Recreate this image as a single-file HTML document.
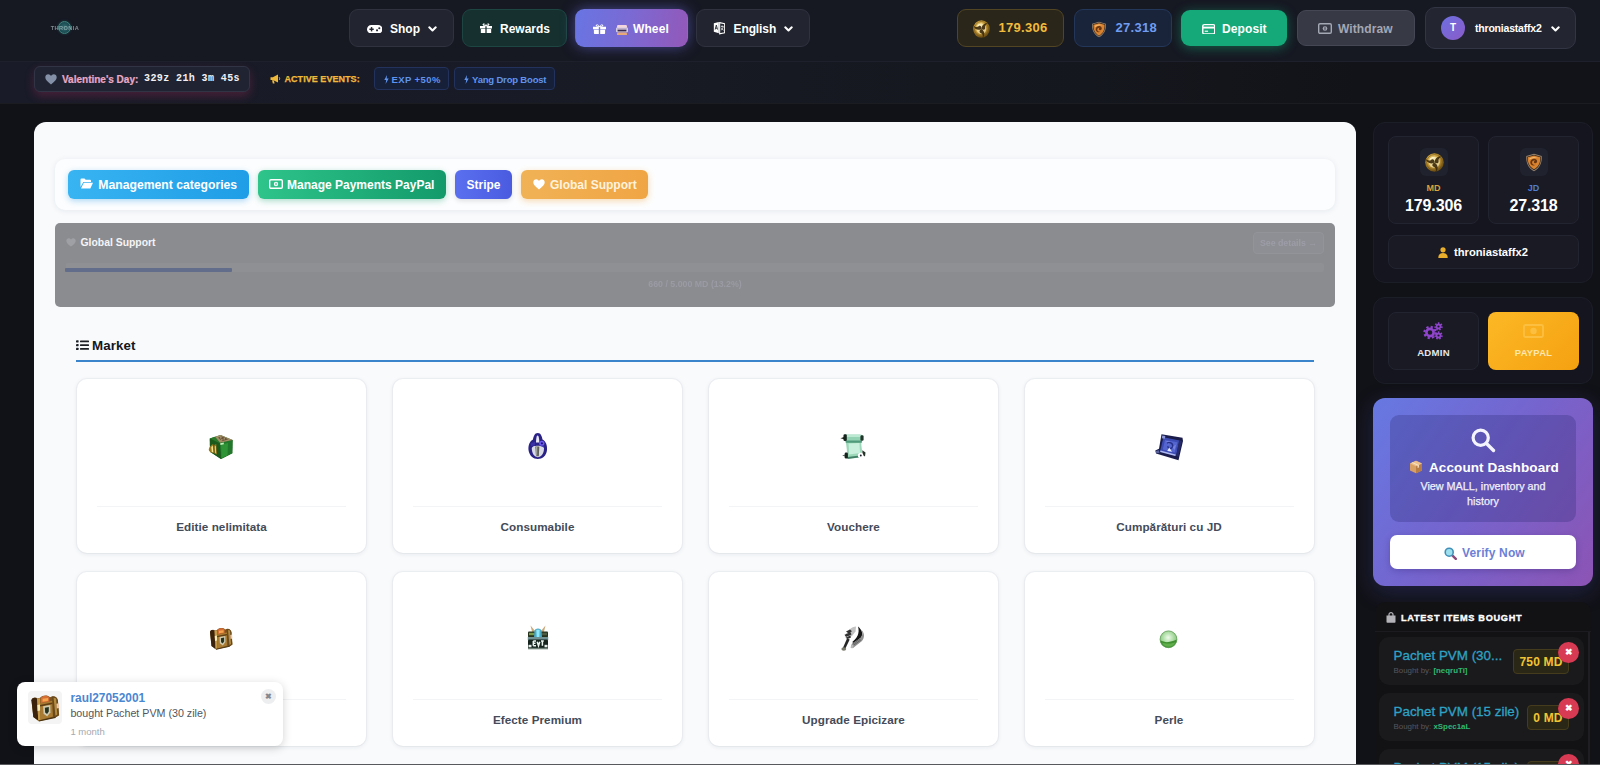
<!DOCTYPE html>
<html lang="en">
<head>
<meta charset="utf-8">
<title>Market</title>
<style>
*{box-sizing:border-box;margin:0;padding:0}
html,body{width:1600px;height:765px;overflow:hidden}
body{background:#111217;font-family:"Liberation Sans",Arial,sans-serif;color:#fff;position:relative;-webkit-font-smoothing:antialiased}
.abs{position:absolute}
svg{display:block}
/* header */
#hdr{left:0;top:0;width:1600px;height:62px;background:#161822;border-bottom:1px solid #1e212c}
#sub{left:0;top:62px;width:1600px;height:42px;background:linear-gradient(90deg,#191b29 0%,#181a24 40%,#15171e 68%,#121318 85%);border-bottom:1px solid #1a1c22}
.hb{position:absolute;border-radius:9px;border:1px solid transparent;display:flex;align-items:center;justify-content:center;font-weight:700;font-size:12px;white-space:nowrap}
.hb span{display:inline-block}
.chip{border-radius:4px;background:#172039;border:1px solid #22325c;color:#5f94ee;font-size:9.500px;font-weight:700;white-space:nowrap;letter-spacing:-.1px}
/* main */
#main{left:34px;top:122px;width:1322px;height:660px;background:#f8fafc;border-radius:12px 12px 0 0}
.tb{position:absolute;top:170px;height:29px;border-radius:6px;color:#fff;font-weight:700;font-size:12px;display:flex;align-items:center;justify-content:center;white-space:nowrap;box-shadow:0 2px 5px rgba(0,0,0,.12)}
.card{position:absolute;width:289px;height:174px;background:#fff;border-radius:10px;box-shadow:0 1px 5px rgba(30,40,60,.09),0 0 0 1px rgba(30,40,60,.03)}
.card .dv{position:absolute;left:20px;right:20px;top:127px;height:1px;background:#f3f4f6}
.card .lb{position:absolute;left:0;right:0;top:141px;text-align:center;font-weight:700;font-size:11.700px;color:#444b59;letter-spacing:.05px}
.card .ic{position:absolute;left:132px;top:55px;width:26px;height:26px}
/* sidebar */
.pn{position:absolute;left:1373px;width:220px;background:#15151f;border:1px solid #1c1e27;border-radius:12px}
.bx{position:absolute;background:#191a24;border:1px solid #22242f;border-radius:8px}

.it{position:absolute;left:1379px;width:205px;height:48px;background:#1a1a1d;border-radius:10px}
.it .t1{left:14.500px;top:11px;font-size:13.400px;color:#2ea2c4;white-space:nowrap;-webkit-text-stroke:.3px #2ea2c4}
.it .t2{left:14.500px;top:29px;font-size:7.900px;color:#56575d;white-space:nowrap}
.it .t2 b{color:#2fb874;font-weight:700}
.it .pr{top:11.500px;height:25px;border-radius:4px;background:#2a2717;border:1px solid #443c1c;color:#f3c331;font-size:12px;font-weight:700;line-height:24px;text-align:center;white-space:nowrap;letter-spacing:.2px}
.it .rx{left:179px;top:4.500px;width:21px;height:21px;border-radius:50%;background:#d93a53;color:#fff;font-size:9px;line-height:21px;text-align:center;font-weight:700}
</style>
</head>
<body>

<div id="hdr" class="abs">
  <!-- logo -->
  <div class="abs" id="logo" style="left:50px;top:17px;width:30px;height:22px;filter:blur(.35px)">
    <div class="abs" style="left:7.500px;top:4px;width:13px;height:13px;border-radius:50%;background:radial-gradient(circle,#2f6f72 0%,#1e4d54 60%,#1a3a42 100%);border:1.200px solid #3c8682;box-shadow:0 0 3px rgba(40,110,110,.5)"></div>
    <div class="abs" style="left:0;top:7.500px;width:30px;text-align:center;font-size:5.600px;font-weight:700;color:#b9c9cc;letter-spacing:.45px;opacity:.65;white-space:nowrap">THRONIA</div>
  </div>
  <!-- Shop -->
  <div class="hb" style="left:349px;top:9px;width:105px;height:38px;background:#22252f;border:1px solid #30333f">
    <svg class="abs" style="left:16.500px;top:14.500px" width="15.500" height="8.500" viewBox="0 0 17 9.400" preserveAspectRatio="none"><rect x="0" y="0" width="17" height="9.400" rx="4.700" fill="#fff"/><rect x="2.600" y="3.900" width="4.800" height="1.600" fill="#22252f"/><rect x="4.200" y="2.300" width="1.600" height="4.800" fill="#22252f"/><circle cx="11" cy="5.900" r="1.150" fill="#22252f"/><circle cx="13.500" cy="3.500" r="1.150" fill="#22252f"/></svg>
    <span class="abs" style="left:40px;top:11.500px">Shop</span>
    <svg class="abs" style="left:78px;top:16px" width="9" height="6.300" viewBox="0 0 10 7"><path d="M1.400 1.500 L5 5 L8.600 1.500" fill="none" stroke="#fff" stroke-width="2.300" stroke-linecap="round" stroke-linejoin="round"/></svg>
  </div>
  <!-- Rewards -->
  <div class="hb" style="left:462px;top:9px;width:105px;height:38px;background:#15302f;border:1px solid #1d4541">
    <svg class="abs gift" style="left:17px;top:12.5px" width="12" height="10.5" viewBox="0 0 13 10.500" preserveAspectRatio="none"><path d="M0 3h13v2.400H0z M.9 6h11.200v3.700a.8.800 0 0 1-.8.800H1.700a.8.800 0 0 1-.8-.8z" fill="#fff"/><path d="M6.500 3C5 3 3.100 2.600 3.100 1.500 3.100.3 5.500.2 6.500 3 7.500.2 9.900.3 9.900 1.500 9.900 2.600 8 3 6.500 3z" fill="#fff" stroke="#fff" stroke-width=".6"/><circle cx="4.700" cy="1.700" r=".55" fill="#15302f"/><circle cx="8.300" cy="1.700" r=".55" fill="#15302f"/><rect x="5.800" y="3.300" width="1.400" height="7.200" fill="#15302f"/></svg>
    <span class="abs" style="left:37px;top:11.500px">Rewards</span>
  </div>
  <!-- Wheel -->
  <div class="hb" style="left:575px;top:9px;width:113px;height:38px;background:linear-gradient(100deg,#6875e3 0%,#7c69d2 50%,#9358b9 100%);box-shadow:0 0 14px rgba(110,110,230,.55)">
    <svg class="abs gift" style="left:16.5px;top:14px" width="13" height="10" viewBox="0 0 13 10.500" preserveAspectRatio="none"><path d="M0 3h13v2.400H0z M.9 6h11.200v3.700a.8.800 0 0 1-.8.800H1.700a.8.800 0 0 1-.8-.8z" fill="#fff"/><path d="M6.500 3C5 3 3.100 2.600 3.100 1.500 3.100.3 5.500.2 6.500 3 7.500.2 9.900.3 9.900 1.500 9.900 2.600 8 3 6.500 3z" fill="#fff" stroke="#fff" stroke-width=".6"/><circle cx="4.700" cy="1.700" r=".55" fill="#6f72dc"/><circle cx="8.300" cy="1.700" r=".55" fill="#6f72dc"/><rect x="5.800" y="3.300" width="1.400" height="7.200" fill="#6f72dc"/></svg>
    <svg class="abs" style="left:39.500px;top:14.500px" width="12" height="10.500" viewBox="0 0 12 10.500"><rect x="1" y="0" width="10" height="3.200" rx="1.200" fill="#f3d3dc"/><rect x="0" y="2.600" width="12" height="4.600" rx="1" fill="#d5cfe2"/><rect x="1.600" y="4.600" width="8.800" height="1.800" fill="#3a2a50"/><rect x="1.200" y="3.300" width="9.600" height="1" fill="#b7a2c8"/><rect x="1" y="7.400" width="10" height="3" rx="1" fill="#e8a878"/></svg>
    <span class="abs" style="left:57px;top:11.500px;letter-spacing:.1px">Wheel</span>
  </div>
  <!-- English -->
  <div class="hb" style="left:696px;top:9px;width:114px;height:38px;background:#22252f;border:1px solid #30333f">
    <svg class="abs" style="left:15.500px;top:11px" width="12.500" height="13.500" viewBox="0 0 15 15" preserveAspectRatio="none"><path d="M1 2.500 L7 1 V13.500 L1 12z" fill="#fff"/><path d="M8 1.800 L14 3 V13 L8 14.200z" fill="none" stroke="#fff" stroke-width="1.300"/><path d="M2.600 9.500 L4 4.500 L5.400 9.500 M3 8 H5" stroke="#22252f" stroke-width="1" fill="none"/><path d="M9.500 6 H12.500 M11 5 V6 M9.800 10 C11 9.500 12 8 12.200 6 M10 7.500 C10.500 9 11.500 9.800 12.800 10.200" stroke="#fff" stroke-width=".9" fill="none"/></svg>
    <span class="abs" style="left:36.500px;top:11.500px;letter-spacing:-.1px">English</span>
    <svg class="abs" style="left:87px;top:16px" width="9" height="6.300" viewBox="0 0 10 7"><path d="M1.400 1.500 L5 5 L8.600 1.500" fill="none" stroke="#fff" stroke-width="2.300" stroke-linecap="round" stroke-linejoin="round"/></svg>
  </div>
  <!-- MD pill -->
  <div class="hb" style="left:957px;top:9px;width:107px;height:38px;background:#2a261a;border:1px solid #514523">
    <svg class="abs" style="left:15px;top:9.500px" width="17" height="18" viewBox="0 0 17 17" preserveAspectRatio="none"><defs><radialGradient id="gc" cx=".42" cy=".36" r=".72"><stop offset="0" stop-color="#f6e9a6"/><stop offset=".45" stop-color="#c99c36"/><stop offset=".8" stop-color="#7c5b19"/><stop offset="1" stop-color="#47330e"/></radialGradient></defs><circle cx="8.500" cy="8.500" r="8.300" fill="url(#gc)"/><circle cx="8.500" cy="8.500" r="7.100" fill="none" stroke="#6e5216" stroke-width=".8" opacity=".6"/><circle cx="8.300" cy="8.300" r="5" fill="#fff3c4" opacity=".6"/><g fill="#3a280a" opacity=".9" transform="translate(8.500 8.500) scale(1.650) translate(-8.500 -8.500)"><path d="M8.500 8.500 C8.500 6.200 10.600 4.600 12.600 5.400 C11.200 5.600 10.500 6.700 10.700 7.800 C10.900 8.800 9.800 9.400 8.500 8.500z"/><path d="M8.500 8.500 C8.500 6.200 10.600 4.600 12.600 5.400 C11.200 5.600 10.500 6.700 10.700 7.800 C10.900 8.800 9.800 9.400 8.500 8.500z" transform="rotate(120 8.500 8.500)"/><path d="M8.500 8.500 C8.500 6.200 10.600 4.600 12.600 5.400 C11.200 5.600 10.500 6.700 10.700 7.800 C10.900 8.800 9.800 9.400 8.500 8.500z" transform="rotate(240 8.500 8.500)"/></g><path d="M4.300 5.200c1.300-1.500 3.300-2 5-1.500-1.900 0-3.300.8-4.300 2.300z" fill="#fff9dc" opacity=".8"/></svg>
    <span class="abs" style="left:40.500px;top:10px;font-size:13px;letter-spacing:.3px;color:#f2bb3c">179.306</span>
  </div>
  <!-- JD pill -->
  <div class="hb" style="left:1074px;top:9px;width:98px;height:38px;background:#19243a;border:1px solid #23375b">
    <svg class="abs" style="left:16px;top:10.500px" width="16" height="17" viewBox="0 0 17 18" preserveAspectRatio="none"><path d="M8.500 .8 L15.800 2.800 C16.300 9 14.200 14.200 8.500 17.200 C2.800 14.200 .7 9 1.200 2.800z" fill="#9a8670"/><path d="M8.500 1.700 L15 3.500 C15.400 9 13.500 13.600 8.500 16.300 C3.500 13.600 1.600 9 2 3.500z" fill="#2e241c"/><path d="M8.500 2.400 L14.400 4 C14.700 9 13 13 8.500 15.500 C4 13 2.300 9 2.600 4z" fill="#d9822f"/><path d="M5 8.500c.3-2.600 3.200-3.900 5.300-2.600 1.200.8 1.500 2.200.8 3.200-.8 1.100-2.400.9-2.700-.3-.2-.8.400-1.400 1.100-1.300-1.300-.8-2.900.2-2.800 1.800.1 1.500 1.600 2.400 3.200 1.900-2.100 1.500-5.200.2-4.900-2.700z" fill="#5b2c0e" opacity=".9"/><path d="M4.200 4.800 L8.500 3.500 L12.500 4.600 C10 4.500 6.500 5 4.200 6.500z" fill="#f6c27a" opacity=".8"/></svg>
    <span class="abs" style="left:40.500px;top:10px;font-size:13px;letter-spacing:.3px;color:#6f9df2">27.318</span>
  </div>
  <!-- Deposit -->
  <div class="hb" style="left:1181px;top:10px;width:106px;height:36px;background:#15a878;box-shadow:0 2px 12px rgba(21,180,125,.45)">
    <svg class="abs" style="left:19.500px;top:12.500px" width="13.500" height="10.500" viewBox="0 0 14 12" preserveAspectRatio="none"><rect x=".8" y=".8" width="12.400" height="10.400" rx="1.600" fill="none" stroke="#fff" stroke-width="1.500"/><rect x="1" y="3" width="12" height="2.200" fill="#fff"/><rect x="2.800" y="7.600" width="3.500" height="1.300" fill="#fff"/></svg>
    <span class="abs" style="left:40px;top:10.500px;letter-spacing:.1px">Deposit</span>
  </div>
  <!-- Withdraw -->
  <div class="hb" style="left:1297px;top:10px;width:118px;height:36px;background:#373a45;border:1px solid #454854;color:#a4a7b4">
    <svg class="abs" style="left:20px;top:12px" width="14" height="11" viewBox="0 0 14 11"><rect x=".7" y=".7" width="12.600" height="9.600" rx="1.300" fill="none" stroke="#a4a7b4" stroke-width="1.400"/><circle cx="7" cy="5.500" r="2.300" fill="#a4a7b4"/><rect x="6.500" y="4.200" width="1" height="2.600" fill="#373a45"/></svg>
    <span class="abs" style="left:40px;top:10.500px;letter-spacing:.1px">Withdraw</span>
  </div>
  <!-- User -->
  <div class="hb" style="left:1425px;top:7px;width:151px;height:42px;background:#232530;border:1px solid #323543;border-radius:10px">
    <div class="abs" style="left:15px;top:8px;width:24px;height:24px;border-radius:50%;background:linear-gradient(135deg,#6d6fe0,#8a5cc8);font-size:10px;line-height:24px;text-align:center">T</div>
    <span class="abs" style="left:49px;top:14px;font-size:10.500px;letter-spacing:-.2px">throniastaffx2</span>
    <svg class="abs" style="left:125px;top:18px" width="9" height="6.300" viewBox="0 0 10 7"><path d="M1.400 1.500 L5 5 L8.600 1.500" fill="none" stroke="#fff" stroke-width="2.300" stroke-linecap="round" stroke-linejoin="round"/></svg>
  </div>
</div>
<div id="sub" class="abs">
  <div class="abs" style="left:34px;top:4px;width:216px;height:26px;border-radius:6px;background:#202331;border:1px solid #313445;box-shadow:0 4px 10px rgba(200,50,105,.27)">
    <svg class="abs" style="left:10px;top:7px" width="12" height="11" viewBox="0 0 12 11"><path d="M6 10.500 C2 7.500 0.300 5.500 0.300 3.300 C0.300 1.500 1.700.3 3.200.3 C4.400.3 5.400 1 6 2 C6.600 1 7.600.3 8.800.3 C10.300.3 11.700 1.500 11.700 3.300 C11.700 5.500 10 7.500 6 10.500z" fill="#8390a8"/></svg>
    <span class="abs" style="left:27px;top:6.500px;font-size:10px;font-weight:700;color:#e9a9c6;white-space:nowrap;-webkit-text-stroke:.2px #e9a9c6">Valentine's Day:</span>
    <span class="abs" style="left:109px;top:5.500px;font-family:'Liberation Mono',monospace;font-size:10px;font-weight:700;color:#f1f1f4;white-space:nowrap;letter-spacing:.4px">329z 21h 3m 45s</span>
  </div>
  <svg class="abs" style="left:270px;top:12px" width="11" height="10" viewBox="0 0 11 10"><path d="M.5 3.200h2.300L8 .6v8L2.800 6H.5z" fill="#f0b93a"/><path d="M2 6.200h1.800l.8 3.200H2.800z" fill="#f0b93a"/><path d="M9 3.200c.9.500.9 2.300 0 2.800" stroke="#f0b93a" stroke-width="1" fill="none"/></svg>
  <span class="abs" style="left:284.500px;top:11.500px;font-size:9px;font-weight:700;color:#f0b93a;white-space:nowrap;letter-spacing:.05px;-webkit-text-stroke:.25px #f0b93a">ACTIVE EVENTS:</span>
  <div class="abs chip" style="left:374px;top:5px;width:75px;height:23px"><svg class="abs" style="left:9px;top:7px" width="5" height="9" viewBox="0 0 5 9"><path d="M3 0L.3 5h1.900L1.600 9 4.700 3.600H2.700z" fill="#5f94ee"/></svg><span class="abs" style="left:16.500px;top:5.500px;font-size:9.500px;letter-spacing:.4px">EXP +50%</span></div>
  <div class="abs chip" style="left:454px;top:5px;width:101px;height:23px"><svg class="abs" style="left:9px;top:7px" width="5" height="9" viewBox="0 0 5 9"><path d="M3 0L.3 5h1.900L1.600 9 4.700 3.600H2.700z" fill="#5f94ee"/></svg><span class="abs" style="left:17px;top:5.500px;font-size:9.500px;letter-spacing:-.18px">Yang Drop Boost</span></div>
</div>

<div id="main" class="abs"></div>
<!-- toolbar -->
<div class="abs" style="left:55px;top:159px;width:1280px;height:51px;background:#fcfdfe;border-radius:10px;box-shadow:0 1px 6px rgba(30,40,70,.08)"></div>
<div class="tb" style="left:68px;width:181px;background:linear-gradient(90deg,#38b4f2,#1f9de6);box-shadow:0 2px 6px rgba(30,150,230,.35)">
  <svg class="abs" style="left:12px;top:8px" width="13" height="11" viewBox="0 0 13 11"><path d="M.5 1.500A1 1 0 0 1 1.500.5h3l1.200 1.300h4.300a1 1 0 0 1 1 1V4H3.300L.5 9z" fill="#fff"/><path d="M3.800 4.800H13L10.300 10.500H1z" fill="#fff"/></svg>
  <span class="abs" style="left:30.300px;top:7.500px;font-size:12.200px">Management categories</span>
</div>
<div class="tb" style="left:258px;width:188px;background:linear-gradient(90deg,#2ec48a,#139a6b);box-shadow:0 2px 6px rgba(20,160,110,.35)">
  <svg class="abs" style="left:11px;top:9px" width="14" height="10" viewBox="0 0 14 10"><rect x=".7" y=".7" width="12.600" height="8.600" rx="1.200" fill="none" stroke="#fff" stroke-width="1.400"/><circle cx="7" cy="5" r="2.200" fill="#fff"/><rect x="6.500" y="3.800" width="1" height="2.400" fill="#21b07c"/></svg>
  <span class="abs" style="left:29px;top:7.500px">Manage Payments PayPal</span>
</div>
<div class="tb" style="left:455px;width:57px;background:linear-gradient(90deg,#5a6ff0,#4a5be0)"><span class="abs" style="left:11.500px;top:7.500px">Stripe</span></div>
<div class="tb" style="left:521px;width:127px;background:linear-gradient(90deg,#f0b256,#f0a544);box-shadow:0 2px 6px rgba(240,165,60,.4)">
  <svg class="abs" style="left:12px;top:9px" width="12" height="11" viewBox="0 0 12 11"><path d="M6 10.500 C2 7.500 0.300 5.500 0.300 3.300 C0.300 1.500 1.700.3 3.200.3 C4.400.3 5.400 1 6 2 C6.600 1 7.600.3 8.800.3 C10.300.3 11.700 1.500 11.700 3.300 C11.700 5.500 10 7.500 6 10.500z" fill="#fff"/></svg>
  <span class="abs" style="left:29px;top:7.500px;color:#fff3dd">Global Support</span>
</div>
<!-- global support panel -->
<div class="abs" style="left:55px;top:223px;width:1280px;height:84px;background:#8b8c90;border-radius:5px">
  <svg class="abs" style="left:11px;top:15px" width="10" height="9" viewBox="0 0 12 11"><path d="M6 10.500 C2 7.500 0.300 5.500 0.300 3.300 C0.300 1.500 1.700.3 3.200.3 C4.400.3 5.400 1 6 2 C6.600 1 7.600.3 8.800.3 C10.300.3 11.700 1.500 11.700 3.300 C11.700 5.500 10 7.500 6 10.500z" fill="#9fa0a5"/></svg>
  <span class="abs" style="left:25.500px;top:13.500px;font-size:10.400px;font-weight:700;color:#f4f4f6;white-space:nowrap">Global Support</span>
  <div class="abs" style="left:1198px;top:9px;width:71px;height:22px;border:1px solid #939499;border-radius:4px;background:#8e8f94;font-size:8.800px;font-weight:700;color:#9c9da7;text-align:center;line-height:21px;white-space:nowrap"><span style="filter:blur(.4px)">See details →</span></div>
  <div class="abs" style="left:11px;top:40px;width:1258px;height:9px;background:#8f9094;border-radius:2px"></div>
  <div class="abs" style="left:10px;top:45px;width:167px;height:4px;background:#626d8b;border-radius:1px"></div>
  <div class="abs" style="left:0;top:55.500px;width:1280px;text-align:center;font-size:8.800px;font-weight:700;color:#9a9ba4;white-space:nowrap;filter:blur(.4px)">660 / 5.000 MD (13.2%)</div>
</div>
<!-- market heading -->
<svg class="abs" style="left:76px;top:339.700px" width="13" height="10.300" viewBox="0 0 13 11" preserveAspectRatio="none"><rect x="0" y=".3" width="2.600" height="2.400" rx=".5" fill="#1c1f26"/><rect x="0" y="4.300" width="2.600" height="2.400" rx=".5" fill="#1c1f26"/><rect x="0" y="8.300" width="2.600" height="2.400" rx=".5" fill="#1c1f26"/><rect x="4" y=".6" width="9" height="1.800" rx=".6" fill="#1c1f26"/><rect x="4" y="4.600" width="9" height="1.800" rx=".6" fill="#1c1f26"/><rect x="4" y="8.600" width="9" height="1.800" rx=".6" fill="#1c1f26"/></svg>
<span class="abs" style="left:92px;top:337.500px;font-size:13.300px;font-weight:700;color:#14171d;white-space:nowrap;letter-spacing:.1px">Market</span>
<div class="abs" style="left:76px;top:359.500px;width:1238px;height:2px;background:#3a84cb"></div>
<!-- cards -->
<div class="card" style="left:77px;top:379px"><div class="dv"></div><div class="lb">Editie nelimitata</div></div>
<div class="card" style="left:393px;top:379px"><div class="dv"></div><div class="lb">Consumabile</div></div>
<div class="card" style="left:709px;top:379px"><div class="dv"></div><div class="lb">Vouchere</div></div>
<div class="card" style="left:1024.5px;top:379px"><div class="dv"></div><div class="lb">Cumpărături cu JD</div></div>
<div class="card" style="left:77px;top:572px"><div class="dv"></div><div class="lb">Pachete</div></div>
<div class="card" style="left:393px;top:572px"><div class="dv"></div><div class="lb">Efecte Premium</div></div>
<div class="card" style="left:709px;top:572px"><div class="dv"></div><div class="lb">Upgrade Epicizare</div></div>
<div class="card" style="left:1024.5px;top:572px"><div class="dv"></div><div class="lb">Perle</div></div>

<!-- card icons -->
<svg width="0" height="0" style="position:absolute"><defs><filter id="bl" x="-10%" y="-10%" width="120%" height="120%"><feGaussianBlur stdDeviation=".45"/></filter><filter id="bl2" x="-10%" y="-10%" width="120%" height="120%"><feGaussianBlur stdDeviation=".7"/></filter></defs></svg>
<!-- 1 green cube -->
<svg class="abs" style="left:208px;top:434px" width="26" height="26" viewBox="0 0 26 26"><g filter="url(#bl)">
<path d="M1.800 4.500 L12.500 1 L24.600 6 L24.300 19.200 L13 25 L2 17.800z" fill="#1c5c20"/>
<path d="M11.500 9 L24.600 6 L24.300 19.200 L13 25z" fill="#23782a"/>
<path d="M13 10.500 L20 9 L19.500 21.500 L13.500 24z" fill="#2f9434"/>
<path d="M1.800 4.500 L11.500 9 L13 25 L2 17.800z" fill="#1a5a1f"/>
<path d="M1.800 4.500 L7 2.800 L12 8.800 L11.500 9z" fill="#2a7a2c"/>
<path d="M7 2.800 L12.500 1 L24.600 6 L12 8.800z" fill="#a39066"/>
<path d="M10 3.500 L14 2.500 L20.500 5.200 L14 7.200z" fill="#6b553a"/>
<path d="M12 4 L13.500 3.700 M15.500 5 L17 4.800 M13 6 L14.500 5.800" stroke="#d8c9a0" stroke-width=".8"/>
<path d="M12.200 9.300 L15.800 8.600 L15.800 10.200 L12.500 11z" fill="#c6f0bc"/>
<path d="M.8 15 C1.500 12.500 3.500 11 5.200 10 L6 19 L3 18.500 C1.500 17.800 .5 16.500 .8 15z" fill="#9a7a1c"/>
<path d="M5.500 12 C6.500 10.500 7.500 10 8.300 10 L9 20.500 L6.300 19.500z" fill="#8a6c18"/>
<path d="M3.300 13 L4.800 11.500 L5.200 18.300 L3.800 18z" fill="#f3e694"/>
<path d="M6.800 12.500 L7.800 11.500 L8.200 19.500 L7.200 19z" fill="#e6d070"/>
</g></svg>
<!-- 2 indigo ring -->
<svg class="abs" style="left:526px;top:431px" width="24" height="30" viewBox="0 0 24 30"><g filter="url(#bl)">
<path d="M11.800 2 C8.500 2 7.500 5.500 7 8.500 C3.500 10.500 2 14.500 2.500 19 C3.200 24.800 7.500 28 11.800 28 C16.200 28 20.500 24.800 21 19 C21.400 14.500 20 10.500 16.500 8.500 C16 5.500 15 2 11.800 2z" fill="#2a2286"/>
<path d="M11.600 4.600 C10.500 4.600 10.100 8 10 11.500 L13.300 11.500 C13.200 8 12.800 4.600 11.600 4.600z" fill="#e9e9f6"/>
<path d="M5.800 17.500 C5.800 15.500 8.500 14.800 11.800 14.800 C15.200 14.800 18 15.500 18 17.500 C18 22.500 15 26.200 11.800 26.200 C8.600 26.200 5.800 22.500 5.800 17.500z" fill="#d9dae8"/>
<path d="M9.300 15.500 L13.300 15.500 L12.800 25.300 L10 25.300z" fill="#5e6058"/>
<path d="M10 15.800 L11.300 15.800 L11.200 24.800 L10.300 24.800z" fill="#a9aaa6"/>
<circle cx="15.800" cy="12.300" r="2.600" fill="#6e5cf0"/><circle cx="15.900" cy="12.300" r="1.100" fill="#1f1870"/>
<path d="M4.500 12.500 L9.300 10.500 L9 14.500 L5 15z" fill="#3a30a8"/>
<path d="M13.500 14.800 L17 14.200 L18 16.500z" fill="#4a40c0"/>
</g></svg>
<!-- 3 mint scroll -->
<svg class="abs" style="left:839px;top:432px" width="28" height="29" viewBox="0 0 28 29"><g filter="url(#bl)">
<path d="M6.500 8 L22.500 8 C22 12 22.500 15 23 18 L22.500 25.500 L8.500 26.800 L8 21 C8 16 7 12 6.500 8z" fill="#9bd8b9"/>
<path d="M9.500 11.500 L20.500 11 C20.500 15 21 18 21.200 21 L10 22.500 C10 18 9.800 14.500 9.500 11.500z" fill="#c8f0dc"/>
<rect x="4.500" y="2.500" width="19.500" height="6" rx="2.800" fill="#93d3b3"/>
<path d="M6 4 L22 4" stroke="#c9f0dd" stroke-width="1.500"/>
<path d="M6.500 8.500 L23 8.500 L22.800 10.800 L6.800 10.800z" fill="#4f9a7b"/>
<rect x="4.500" y="2.300" width="3.300" height="6.800" rx="1.300" fill="#16221c"/><path d="M1.500 6.200 L5 5 L5 7.300z" fill="#16221c"/>
<rect x="21.400" y="3.200" width="3.200" height="5.600" rx="1.300" fill="#23362c"/>
<path d="M8.500 25 L21 23.500 L21 25.300 L8.500 26.900z" fill="#3f7f64"/>
<rect x="5.700" y="20.500" width="3.200" height="6" rx="1.300" fill="#16221c"/><path d="M3.200 23.500 L6 22.500 L6 24.600z" fill="#4a5a52"/>
<path d="M23.300 18.200 L26.500 20.500 L26 24.500 L23.500 23z" fill="#25342c"/>
<circle cx="21.600" cy="23.400" r="2.700" fill="#fff"/><circle cx="21.800" cy="23.500" r=".95" fill="#1c2030"/>
</g></svg>
<!-- 4 blue scroll -->
<svg class="abs" style="left:1153px;top:430.500px" width="32" height="31.500" viewBox="0 0 32 30" preserveAspectRatio="none"><g filter="url(#bl)">
<path d="M8.500 3 L29.500 6.500 L30 9.500 L25.500 27.800 L3 21.500 L2.300 18.500 L6 17z" fill="#1a1e4c"/>
<path d="M10.500 6 L26.500 9 L23 23.500 L7 19.500z" fill="#3c4bb4"/>
<path d="M12 8.500 L24.500 10.800 L21.800 20.500 L9.800 17.500z" fill="#5565d0"/>
<path d="M13 10 L17 9.500 L16 13z" fill="#7d8be6"/><path d="M19 15 L23 13 L21.500 18z" fill="#7483e0"/>
<path d="M14 11.500 C17 10 20.500 12 19.500 15 C18.500 17.500 14.500 17 15 14.500" fill="none" stroke="#28328a" stroke-width="1.400"/>
<path d="M16.200 15.800 L19 19.800 L14.300 19z" fill="#e4eaff"/>
<path d="M7.300 19.300 L22.500 23.200" stroke="#b0baf4" stroke-width="1.500"/>
<path d="M9.300 4.300 L12.300 4.800 L11.800 7.500 L8.800 7z" fill="#8b95d8"/>
<path d="M26 9 L28.800 9.500 L25.300 24.500 L23.300 23.800z" fill="#262c6a"/>
<path d="M2.800 19 L6 18.300 L6.500 21 L3.300 21.300z" fill="#5a629e"/>
</g></svg>
<!-- 5 chest -->
<svg class="abs" style="left:207px;top:625px" width="28" height="28" viewBox="0 0 28 28"><g filter="url(#bl)"><path d="M3 7 C3.500 4.500 6.500 4 8 5.500 L10 5 C12 2.500 16.500 2.500 18 4.500 L19.500 4 C21.500 3 24 4.500 24.500 7 L25.500 19.500 L22.500 21.500 L9 24.500 L4.500 21z" fill="#7a5520"/><path d="M3 7 C3.500 4.800 6 4.500 7.500 5.800 L8.500 24 L4.500 21z" fill="#3a240e"/><path d="M7.500 6 L10 5.200 L10.500 23.800 L8.500 24z" fill="#c59a48"/><path d="M10 9.500 L20 7.500 L20.500 20.500 L10.500 23.500z" fill="#a87a30"/><path d="M10.500 5 C12.500 2.800 16 2.800 17.500 4.800 L17.500 8 L10.500 9.300z" fill="#d56e36"/><path d="M12 5.800 L16.500 5.200 L16.500 7.500 L12 8.200z" fill="#f5a54c"/><path d="M7.800 11 L10 10.600 L10 15.600 L8 16z" fill="#f6ebb4"/><path d="M10 11.600 L20 9.600" stroke="#5e3e14" stroke-width="1.300"/><path d="M19.500 4.200 C21.500 3.300 23.800 4.800 24.300 7 L25.300 19.500 L22.500 21.500 L20.500 20.500 L20 7.500z" fill="#6a4a1c"/><path d="M21 5 L23 5.500 L24 19 L22.500 20z" fill="#b48c40"/><path d="M23.300 10 L25 9.600 L25.400 13.500 L23.600 14z" fill="#f0c8a8"/><path d="M12.500 12 L18.300 10.900 L18.400 17 L15.800 20.500 L12.800 18.200z" fill="#cfcab0"/><path d="M13.900 13.200 L17.100 12.600 L17.100 16.500 L15.700 18.500 L14.100 17.200z" fill="#26331f"/><path d="M9 24.300 L22.500 21.300" stroke="#4a3210" stroke-width=".9"/></g></svg>
<!-- 6 event box -->
<svg class="abs" style="left:525px;top:624px" width="26" height="28" viewBox="0 0 26 28"><g filter="url(#bl2)">
<path d="M5.500 1.500 L10 7 L7.500 9.500z" fill="#c8a878"/><path d="M20.500 1.500 L16 7 L18.500 9.500z" fill="#c8a878"/>
<rect x="3" y="7.500" width="20" height="6" rx="1" fill="#26321f"/>
<rect x="4" y="8.800" width="5.500" height="2.400" fill="#7a9a4c"/><rect x="16.500" y="8.800" width="5.500" height="2.400" fill="#4c5a40"/>
<path d="M9.500 6.500 C10.500 3.800 15.500 3.800 16.500 6.500 L17 14 L9 14z" fill="#4aa9c6"/>
<path d="M11.300 5.800 L14.700 5.800 L14.300 13.500 L11.700 13.500z" fill="#8fe8fa"/>
<rect x="2.800" y="13" width="20.400" height="3" fill="#6f9094"/>
<rect x="3" y="15.500" width="20" height="9" rx="1" fill="#12221d"/>
<path d="M8.300 17 L8.300 21.800 M8.300 17 L11 17 M8.300 19.300 L10.500 19.300 M8.300 21.800 L11 21.800 M12.200 17.800 L13.500 21.800 L14.800 17.800 M16 17 L18.800 17 M17.400 17 L17.400 21.800" stroke="#eef6f2" stroke-width="1.500" fill="none"/>
<rect x="3.500" y="20.800" width="3" height="2.500" fill="#e6ece8"/><rect x="19.500" y="20.800" width="3" height="2.500" fill="#e6ece8"/>
<rect x="3" y="23.800" width="20" height="1.500" fill="#6f8076"/>
</g></svg>
<!-- 7 dagger -->
<svg class="abs" style="left:840px;top:624px" width="28" height="29" viewBox="0 0 28 29"><g filter="url(#bl)">
<path d="M9.500 5.500 C11.500 3.500 14 2.500 16 2.500 L15.500 7.500 L12 12 L8.500 13.500 L6 10z" fill="#c2c2c2"/>
<path d="M6 7.500 L10 5.500 L12 7.200 L8.500 9.200z M4.500 10.800 L10.500 8.300 L11.500 10.500 L6 13z M5.500 13.800 L10.500 11.500 L10.800 13.800 L7.500 15z" fill="#303030"/>
<path d="M7 14.500 L9.700 15.600 L5.400 24.600 L2.900 24z" fill="#262626"/>
<ellipse cx="3.800" cy="25" rx="2.400" ry="1.700" fill="#77786a"/>
<path d="M18 2.500 C22 6 23.500 10 21 13.500 L13.500 19.500 L12.300 18 C17 14 20 9.500 18 2.500z" fill="#131313"/>
<path d="M21.500 6 C25 9.500 24.500 14 22 17 L13 24 L10.800 23 L12 19.500 L21 13.500 C22.500 11.500 22.800 8.500 21.500 6z" fill="#8f8f8f"/>
<path d="M13 20 L20 14.800 M12.500 22 L21 15.800" stroke="#5a5a5a" stroke-width=".8"/>
<path d="M11.500 20.500 L14 21.500 L12.300 24.500 L10.500 23.800z" fill="#b8b8b8"/>
</g></svg>
<!-- 8 pearl -->
<svg class="abs" style="left:1158px;top:629px" width="21" height="21" viewBox="0 0 21 21"><defs><radialGradient id="pg" cx=".48" cy=".4" r=".55"><stop offset="0" stop-color="#eefaea"/><stop offset=".55" stop-color="#b0dfa8"/><stop offset="1" stop-color="#86c47c"/></radialGradient></defs><g filter="url(#bl)">
<circle cx="10.500" cy="10.300" r="8.400" fill="url(#pg)"/>
<path d="M2.200 11.200 C5 12.500 8 13.500 10.500 13 C13.500 12.500 16.500 11.500 18.800 10.500 C18.800 15 15 18.700 10.500 18.700 C6 18.700 2.200 15.500 2.200 11.200z" fill="#3f9030"/>
<path d="M4 13.500 C7 15 14 15 17.500 13 C16 16.500 13.500 17.800 10.500 17.800 C7.500 17.800 5 16.200 4 13.500z" fill="#5fae4c"/>
<circle cx="10.500" cy="10.300" r="8.400" fill="none" stroke="#5a9a50" stroke-width=".8"/>
</g></svg>
<!-- toast -->
<div class="abs" id="toast" style="left:17px;top:682px;width:266px;height:64px;background:#fff;border-radius:8px;box-shadow:0 2px 10px rgba(0,0,0,.18)">
  <div class="abs" id="tic" style="left:11px;top:9px;width:34px;height:33px;border-radius:4px;background:#f4f4f5"><svg class="abs" style="left:1px;top:2px" width="32" height="30" viewBox="1 1 26 25" preserveAspectRatio="none"><g filter="url(#bl)"><path d="M3 7 C3.500 4.500 6.500 4 8 5.500 L10 5 C12 2.500 16.500 2.500 18 4.500 L19.500 4 C21.500 3 24 4.500 24.500 7 L25.500 19.500 L22.500 21.500 L9 24.500 L4.500 21z" fill="#7a5520"/><path d="M3 7 C3.500 4.800 6 4.500 7.500 5.800 L8.500 24 L4.500 21z" fill="#3a240e"/><path d="M7.500 6 L10 5.200 L10.500 23.800 L8.500 24z" fill="#c59a48"/><path d="M10 9.500 L20 7.500 L20.500 20.500 L10.500 23.500z" fill="#a87a30"/><path d="M10.500 5 C12.500 2.800 16 2.800 17.500 4.800 L17.500 8 L10.500 9.300z" fill="#d56e36"/><path d="M12 5.800 L16.500 5.200 L16.500 7.500 L12 8.200z" fill="#f5a54c"/><path d="M7.800 11 L10 10.600 L10 15.600 L8 16z" fill="#f6ebb4"/><path d="M10 11.600 L20 9.600" stroke="#5e3e14" stroke-width="1.300"/><path d="M19.500 4.200 C21.500 3.300 23.800 4.800 24.300 7 L25.300 19.500 L22.500 21.500 L20.500 20.500 L20 7.500z" fill="#6a4a1c"/><path d="M21 5 L23 5.500 L24 19 L22.500 20z" fill="#b48c40"/><path d="M23.300 10 L25 9.600 L25.400 13.500 L23.600 14z" fill="#f0c8a8"/><path d="M12.500 12 L18.300 10.900 L18.400 17 L15.800 20.500 L12.800 18.200z" fill="#cfcab0"/><path d="M13.900 13.200 L17.100 12.600 L17.100 16.500 L15.700 18.500 L14.100 17.200z" fill="#26331f"/><path d="M9 24.300 L22.500 21.300" stroke="#4a3210" stroke-width=".9"/></g></svg></div>
  <span class="abs" style="left:53.400px;top:8.500px;font-size:11.900px;font-weight:700;color:#4a87d2;white-space:nowrap">raul27052001</span>
  <span class="abs" style="left:53.400px;top:25px;font-size:10.700px;color:#50555d;white-space:nowrap">bought Pachet PVM (30 zile)</span>
  <span class="abs" style="left:53.400px;top:44px;font-size:9.500px;color:#a6a9b0;white-space:nowrap">1 month</span>
  <div class="abs" style="left:244px;top:7px;width:15px;height:15px;border-radius:50%;background:#edeef0;color:#85888f;font-size:8px;font-weight:700;line-height:15px;text-align:center">✖</div>
</div>

<!-- sidebar panel 1 -->
<div class="pn" style="top:122px;height:161px"></div>
<div class="bx" style="left:1388px;top:136px;width:91px;height:88px">
  <div class="abs" style="left:31px;top:11px;width:28px;height:28px;border-radius:6px;background:#20222d"></div>
  <svg class="abs" style="left:35.500px;top:15.500px" width="19" height="19" viewBox="0 0 17 17"><circle cx="8.500" cy="8.500" r="8.300" fill="url(#gc)"/><circle cx="8.500" cy="8.500" r="7.100" fill="none" stroke="#6e5216" stroke-width=".8" opacity=".6"/><circle cx="8.300" cy="8.300" r="5" fill="#fff3c4" opacity=".6"/><g fill="#3a280a" opacity=".9" transform="translate(8.500 8.500) scale(1.650) translate(-8.500 -8.500)"><path d="M8.500 8.500 C8.500 6.200 10.600 4.600 12.600 5.400 C11.200 5.600 10.500 6.700 10.700 7.800 C10.900 8.800 9.800 9.400 8.500 8.500z"/><path d="M8.500 8.500 C8.500 6.200 10.600 4.600 12.600 5.400 C11.200 5.600 10.500 6.700 10.700 7.800 C10.900 8.800 9.800 9.400 8.500 8.500z" transform="rotate(120 8.500 8.500)"/><path d="M8.500 8.500 C8.500 6.200 10.600 4.600 12.600 5.400 C11.200 5.600 10.500 6.700 10.700 7.800 C10.900 8.800 9.800 9.400 8.500 8.500z" transform="rotate(240 8.500 8.500)"/></g><path d="M4.300 5.200c1.300-1.500 3.300-2 5-1.500-1.900 0-3.300.8-4.300 2.300z" fill="#fff9dc" opacity=".8"/></svg>
  <div class="abs" style="left:0;top:46px;width:89px;text-align:center;font-size:9px;font-weight:700;color:#d9a33a">MD</div>
  <div class="abs" style="left:0;top:59.500px;width:89px;text-align:center;font-size:16px;font-weight:700;color:#fff;letter-spacing:-.15px">179.306</div>
</div>
<div class="bx" style="left:1488px;top:136px;width:91px;height:88px">
  <div class="abs" style="left:31px;top:11px;width:28px;height:28px;border-radius:6px;background:#20222d"></div>
  <svg class="abs" style="left:36px;top:16px" width="18" height="19" viewBox="0 0 17 18"><path d="M8.500 .8 L15.800 2.800 C16.300 9 14.200 14.200 8.500 17.200 C2.800 14.200 .7 9 1.200 2.800z" fill="#9a8670"/><path d="M8.500 1.700 L15 3.500 C15.400 9 13.500 13.600 8.500 16.300 C3.500 13.600 1.600 9 2 3.500z" fill="#2e241c"/><path d="M8.500 2.400 L14.400 4 C14.700 9 13 13 8.500 15.500 C4 13 2.300 9 2.600 4z" fill="#d9822f"/><path d="M5 8.500c.3-2.600 3.200-3.900 5.300-2.600 1.200.8 1.500 2.200.8 3.200-.8 1.100-2.400.9-2.700-.3-.2-.8.400-1.400 1.100-1.300-1.300-.8-2.900.2-2.800 1.800.1 1.500 1.600 2.400 3.200 1.900-2.100 1.500-5.200.2-4.900-2.700z" fill="#5b2c0e" opacity=".9"/><path d="M4.200 4.800 L8.500 3.500 L12.500 4.600 C10 4.500 6.500 5 4.200 6.500z" fill="#f6c27a" opacity=".8"/></svg>
  <div class="abs" style="left:0;top:46px;width:89px;text-align:center;font-size:9px;font-weight:700;color:#4f7fd0">JD</div>
  <div class="abs" style="left:0;top:59.500px;width:89px;text-align:center;font-size:16px;font-weight:700;color:#fff;letter-spacing:-.15px">27.318</div>
</div>
<div class="bx" style="left:1388px;top:235px;width:191px;height:34px">
  <svg class="abs" style="left:49px;top:11px" width="10" height="11" viewBox="0 0 10 11"><circle cx="5" cy="2.800" r="2.600" fill="#e9ae2c"/><path d="M.3 11c0-3.500 1.800-5 4.700-5s4.700 1.500 4.700 5z" fill="#e9ae2c"/></svg>
  <span class="abs" style="left:65px;top:9.500px;font-size:11.200px;font-weight:700;color:#fff;white-space:nowrap">throniastaffx2</span>
</div>
<!-- sidebar panel 2 -->
<div class="pn" style="top:297px;height:87px"></div>
<div class="bx" style="left:1388px;top:312px;width:91px;height:58px">
  <svg class="abs" style="left:34px;top:9px" width="21" height="18" viewBox="0 0 21 18">
    <g fill="none" stroke="#8f45cb"><circle cx="7" cy="10.500" r="3.600" stroke-width="2.600"/><circle cx="7" cy="10.500" r="5.600" stroke-width="2.200" stroke-dasharray="2.200 2.200"/><circle cx="15.500" cy="4.500" r="2" stroke-width="1.800"/><circle cx="15.500" cy="4.500" r="3.400" stroke-width="1.600" stroke-dasharray="1.500 1.500"/><circle cx="15.500" cy="13.500" r="2" stroke-width="1.800"/><circle cx="15.500" cy="13.500" r="3.400" stroke-width="1.600" stroke-dasharray="1.500 1.500"/></g></svg>
  <div class="abs" style="left:0;top:34px;width:89px;text-align:center;font-size:9.600px;font-weight:700;color:#e6e6ea;letter-spacing:.25px">ADMIN</div>
</div>
<div class="abs" style="left:1488px;top:312px;width:91px;height:58px;border-radius:8px;background:linear-gradient(135deg,#fcb826,#f5a110)">
  <svg class="abs" style="left:35px;top:12px" width="21" height="14" viewBox="0 0 21 14"><rect x="1" y="1" width="19" height="12" rx="1.500" fill="none" stroke="#fcbf40" stroke-width="1.800"/><circle cx="10.500" cy="7" r="3.200" fill="#fcbf40"/></svg>
  <div class="abs" style="left:0;top:35px;width:91px;text-align:center;font-size:9.400px;font-weight:700;color:#fde7b0;letter-spacing:.25px">PAYPAL</div>
</div>
<!-- sidebar panel 3 -->
<div class="abs" style="left:1373px;top:398px;width:220px;height:188px;border-radius:12px;background:linear-gradient(125deg,#6779e2 0%,#7465cf 45%,#8c54b4 100%);box-shadow:0 6px 22px rgba(80,80,200,.26)"></div>
<div class="abs" style="left:1390px;top:415px;width:186px;height:107px;border-radius:9px;background:rgba(40,40,110,.28)"></div>
<svg class="abs" style="left:1469px;top:426px" width="28" height="28" viewBox="0 0 28 28"><circle cx="11.700" cy="11.700" r="7.600" fill="none" stroke="#f4f4ff" stroke-width="3.200"/><path d="M17.500 17.500 L24.500 24.500" stroke="#f4f4ff" stroke-width="3.400" stroke-linecap="round"/></svg>
<svg class="abs" style="left:1409px;top:460px" width="14" height="14" viewBox="0 0 14 14"><path d="M7 .8 L13 3.500 V10.500 L7 13.300 L1 10.500 V3.500z" fill="#d9a066"/><path d="M7 6.300 L13 3.500 V10.500 L7 13.300z" fill="#b87c45"/><path d="M7 .8 L13 3.500 L7 6.300 L1 3.500z" fill="#edc08c"/><path d="M3.800 2.200 L9.900 5 V7.500 L8.600 8 V5.600 L2.600 2.800z" fill="#f5e3c8"/></svg>
<span class="abs" style="left:1429px;top:459.700px;font-size:13.500px;font-weight:700;color:#fff;white-space:nowrap;letter-spacing:.1px">Account Dashboard</span>
<div class="abs" style="left:1390px;top:479px;width:186px;text-align:center;font-size:10.800px;line-height:15.300px;color:#f0f0fb;-webkit-text-stroke:.25px #f0f0fb">View MALL, inventory and<br>history</div>
<div class="abs" style="left:1390px;top:535px;width:186px;height:34px;border-radius:7px;background:#fff;box-shadow:0 2px 6px rgba(30,20,90,.25)">
  <svg class="abs" style="left:53.500px;top:11.500px" width="13" height="13" viewBox="0 0 13 13"><path d="M7.800 7.800 L11.800 11.800" stroke="#8c4a7a" stroke-width="2.400" stroke-linecap="round"/><circle cx="5.200" cy="5.200" r="4" fill="#9fe0ee" stroke="#3f8fb8" stroke-width="1.600"/></svg>
  <span class="abs" style="left:72px;top:10.500px;font-size:12px;font-weight:700;color:#6b80d6;white-space:nowrap;letter-spacing:.15px">Verify Now</span>
</div>
<!-- latest items -->
<div class="abs" style="left:1375px;top:602px;width:216px;height:180px;background:#121215;border-radius:10px 10px 0 0"></div>
<div class="abs" style="left:1375px;top:631px;width:216px;height:1px;background:#1b1b20"></div>
<div class="abs" style="left:1588px;top:632px;width:2px;height:140px;background:#1e1e23"></div>
<svg class="abs" style="left:1386px;top:612px" width="10" height="11" viewBox="0 0 10 11"><path d="M.5 3.500h9V10a.8.8 0 0 1-.8.8H1.300A.8.8 0 0 1 .5 10z" fill="#b3b3b8"/><path d="M3 4V2.600a2 2 0 0 1 4 0V4" fill="none" stroke="#b3b3b8" stroke-width="1.200"/></svg>
<span class="abs" style="left:1401px;top:612.500px;font-size:9.200px;font-weight:700;color:#fff;white-space:nowrap;letter-spacing:.7px;-webkit-text-stroke:.35px #fff">LATEST ITEMS BOUGHT</span>
<div class="it" style="top:637px">
  <span class="abs t1">Pachet PVM (30...</span>
  <span class="abs t2">Bought by: <b>[neqruTi]</b></span>
  <div class="abs pr" style="left:134px;width:56px">750 MD</div>
  <div class="abs rx">✖</div>
</div>
<div class="it" style="top:693px">
  <span class="abs t1">Pachet PVM (15 zile)</span>
  <span class="abs t2">Bought by: <b>xSpec1aL</b></span>
  <div class="abs pr" style="left:148px;width:42px">0 MD</div>
  <div class="abs rx">✖</div>
</div>
<div class="it" style="top:749px">
  <span class="abs t1">Pachet PVM (15 zile)</span>
  <div class="abs pr" style="left:148px;width:42px">0 MD</div>
  <div class="abs rx">✖</div>
</div>
<div class="abs" style="left:0;top:764px;width:1600px;height:1px;background:#58595c;z-index:50"></div>
</body>
</html>
